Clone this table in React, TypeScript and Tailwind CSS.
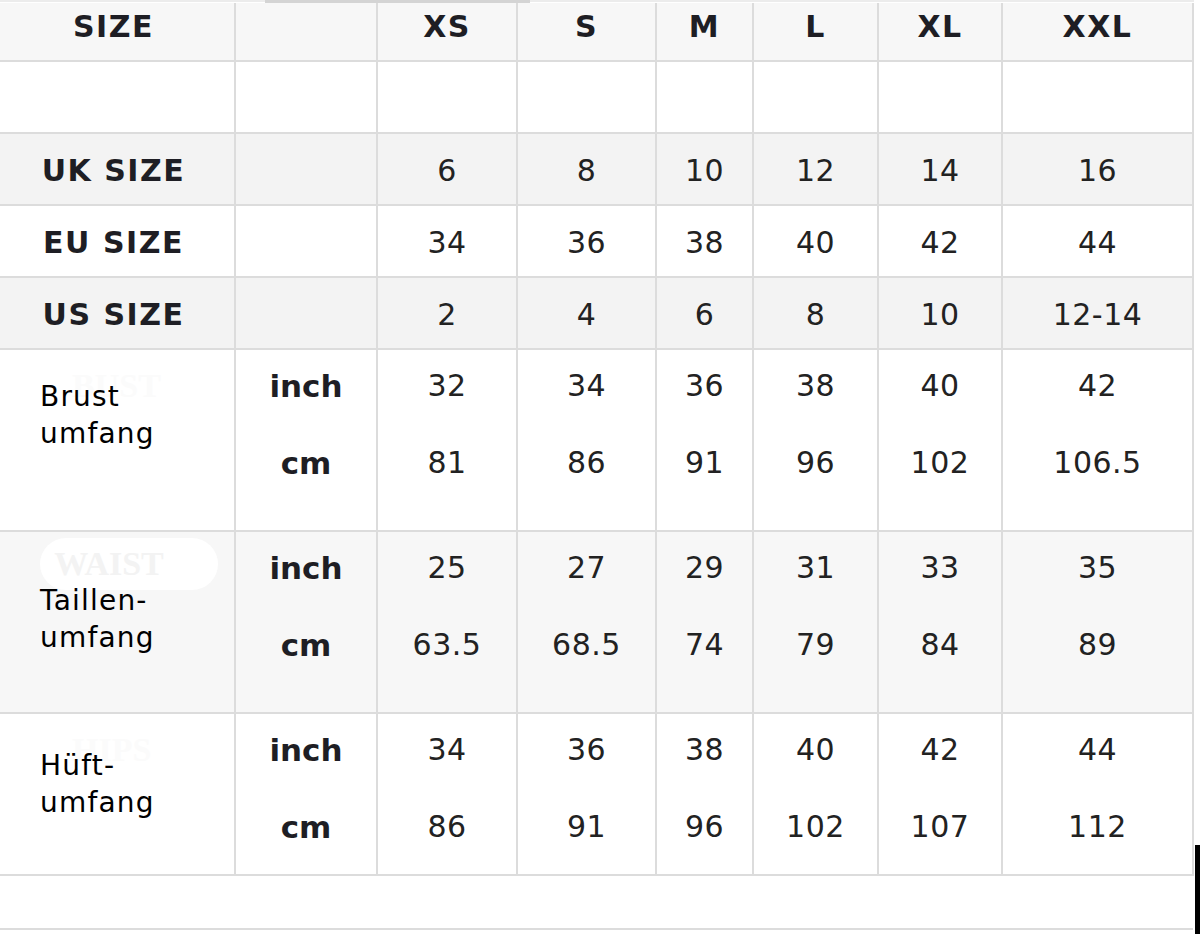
import React from "react";

const W = [
  "w-[236px]",
  "w-[142px]",
  "w-[140px]",
  "w-[139px]",
  "w-[97px]",
  "w-[125px]",
  "w-[124px]",
  "w-[191px]",
];

const cellBase = "shrink-0 border-r-2 border-[#dcdcdc]";
const num = "text-[30px] leading-[40px] tracking-[0.5px] text-[#222] font-['DejaVu_Sans',sans-serif]";
const bold = "text-[30px] leading-[40px] tracking-[1.5px] font-bold text-[#1e1e24] font-['DejaVu_Sans',sans-serif]";
const unit = "text-[31px] leading-[40px] font-bold text-[#1e1e24] font-['DejaVu_Sans',sans-serif]";

function SimpleRow({
  label,
  values,
  bg,
  h,
  isHeader,
}: {
  label: string;
  values: string[];
  bg: string;
  h: string;
  isHeader?: boolean;
}) {
  const pt = isHeader ? "pt-[4px]" : "pt-[17px]";
  return (
    <div className={`flex ${h} ${bg} border-b-2 border-[#dcdcdc]`}>
      <div className={`${cellBase} ${W[0]} ${pt} pr-[7px] text-center ${bold}`}>{label}</div>
      <div className={`${cellBase} ${W[1]}`}></div>
      {values.map((v, i) => (
        <div key={i} className={`${cellBase} ${W[i + 2]} ${pt} text-center ${isHeader ? bold : num}`}>
          {v}
        </div>
      ))}
    </div>
  );
}

function MeasureRow({
  label1,
  label2,
  labelPt,
  inch,
  cm,
  h,
  bg,
  watermark,
}: {
  label1: string;
  label2: string;
  labelPt: string;
  inch: string[];
  cm: string[];
  h: string;
  bg: string;
  watermark: React.ReactNode;
}) {
  return (
    <div className={`flex ${h} ${bg} border-b-2 border-[#dcdcdc]`}>
      <div className={`${cellBase} ${W[0]} relative ${labelPt} pl-[40px]`}>
        {watermark}
        <div className="relative text-[28px] leading-[37px] tracking-[1.2px] text-black font-['DejaVu_Sans',sans-serif]">
          <div>{label1}</div>
          <div>{label2}</div>
        </div>
      </div>
      <div className={`${cellBase} ${W[1]} flex flex-col items-center pt-[16px]`}>
        <div className={unit}>inch</div>
        <div className={`${unit} mt-[37px]`}>cm</div>
      </div>
      {inch.map((v, i) => (
        <div key={i} className={`${cellBase} ${W[i + 2]} flex flex-col items-center pt-[16px]`}>
          <div className={num}>{v}</div>
          <div className={`${num} mt-[37px]`}>{cm[i]}</div>
        </div>
      ))}
    </div>
  );
}

export default function App() {
  return (
    <div className="relative w-[1200px] h-[934px] bg-white overflow-hidden">
      {/* top strip */}
      <div className="flex h-[3px] w-[1194px]">
        <div className="w-[265px] h-[2px] bg-[#ececec]"></div>
        <div className="w-[265px] h-[3px] bg-[#d4d4d4]"></div>
        <div className="flex-1 h-[2px] bg-[#ececec]"></div>
      </div>
      <div className="w-[1194px]">
        <SimpleRow label="SIZE" values={["XS", "S", "M", "L", "XL", "XXL"]} bg="bg-[#f7f7f7]" h="h-[59px]" isHeader />
        <SimpleRow label="" values={["", "", "", "", "", ""]} bg="bg-white" h="h-[72px]" />
        <SimpleRow label="UK SIZE" values={["6", "8", "10", "12", "14", "16"]} bg="bg-[#f3f3f3]" h="h-[72px]" />
        <SimpleRow label="EU SIZE" values={["34", "36", "38", "40", "42", "44"]} bg="bg-white" h="h-[72px]" />
        <SimpleRow label="US SIZE" values={["2", "4", "6", "8", "10", "12-14"]} bg="bg-[#f3f3f3]" h="h-[72px]" />
        <MeasureRow
          label1="Brust"
          label2="umfang"
          labelPt="pt-[28px]"
          inch={["32", "34", "36", "38", "40", "42"]}
          cm={["81", "86", "91", "96", "102", "106.5"]}
          h="h-[182px]"
          bg="bg-white"
          watermark={
            <div className="absolute left-[72px] top-[16px] text-[34px] leading-[40px] font-bold text-[#fbfbfb] font-['Liberation_Serif',serif]">
              BUST
            </div>
          }
        />
        <MeasureRow
          label1="Taillen-"
          label2="umfang"
          labelPt="pt-[50px]"
          inch={["25", "27", "29", "31", "33", "35"]}
          cm={["63.5", "68.5", "74", "79", "84", "89"]}
          h="h-[182px]"
          bg="bg-[#f7f7f7]"
          watermark={
            <div className="absolute left-[40px] top-[6px] w-[178px] h-[52px] rounded-[26px] bg-white flex items-center justify-center">
              <span className="text-[34px] leading-[40px] font-bold text-[#f3f3f3] font-['Liberation_Serif',serif] mr-[40px]">
                WAIST
              </span>
            </div>
          }
        />
        <MeasureRow
          label1="Hüft-"
          label2="umfang"
          labelPt="pt-[33px]"
          inch={["34", "36", "38", "40", "42", "44"]}
          cm={["86", "91", "96", "102", "107", "112"]}
          h="h-[162px]"
          bg="bg-white"
          watermark={
            <div className="absolute left-[72px] top-[16px] text-[34px] leading-[40px] font-bold text-[#fbfbfb] font-['Liberation_Serif',serif]">
              HIPS
            </div>
          }
        />
        <div className="h-[54px] w-[1193px] bg-white border-b-2 border-[#dcdcdc]"></div>
      </div>
      <div className="absolute left-[1195px] top-[845px] w-[5px] h-[89px] bg-black"></div>
    </div>
  );
}
